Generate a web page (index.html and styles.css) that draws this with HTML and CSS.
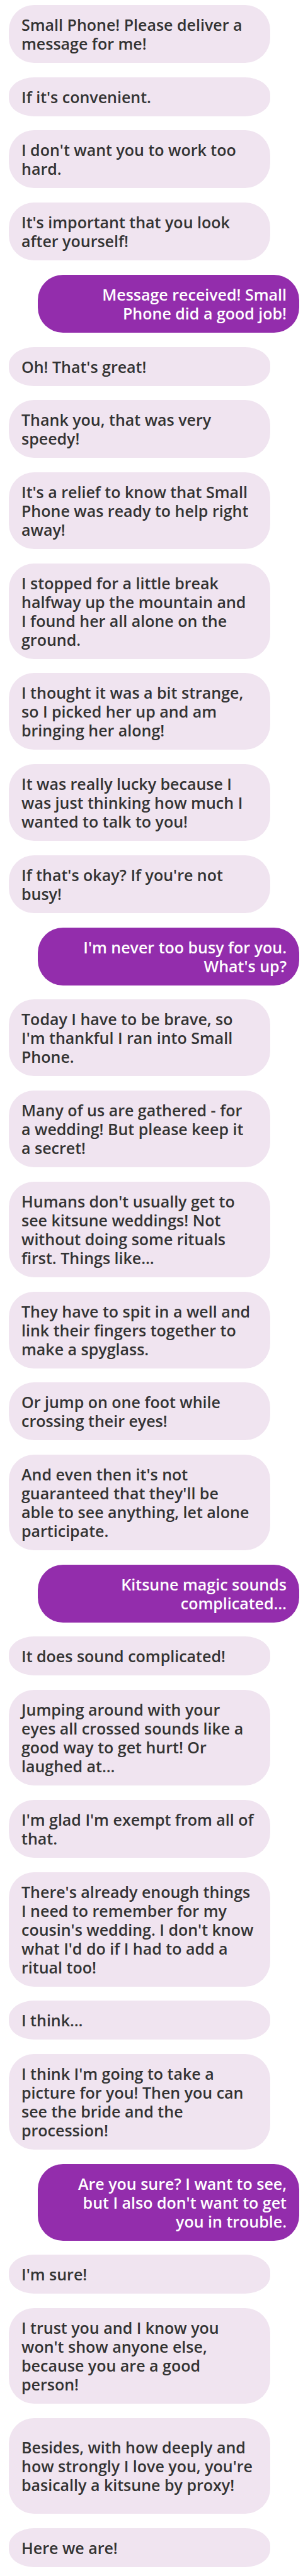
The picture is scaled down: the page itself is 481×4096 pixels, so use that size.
FILE: index.html
```html
<!DOCTYPE html>
<html lang="en">
<head>
<meta charset="utf-8">
<meta name="viewport" content="width=device-width, initial-scale=1">
<title>Messages</title>
<link rel="stylesheet" href="styles.css">
</head>
<body>
<main class="chat">
  <p class="bubble">Small Phone! Please deliver a<br>message for me!</p>
  <p class="bubble single">If it's convenient.</p>
  <p class="bubble">I don't want you to work too<br>hard.</p>
  <p class="bubble">It's important that you look<br>after yourself!</p>
  <p class="bubble reply">Message received! Small<br>Phone did a good job!</p>
  <p class="bubble single">Oh! That's great!</p>
  <p class="bubble">Thank you, that was very<br>speedy!</p>
  <p class="bubble">It's a relief to know that Small<br>Phone was ready to help right<br>away!</p>
  <p class="bubble">I stopped for a little break<br>halfway up the mountain and<br>I found her all alone on the<br>ground.</p>
  <p class="bubble">I thought it was a bit strange,<br>so I picked her up and am<br>bringing her along!</p>
  <p class="bubble">It was really lucky because I<br>was just thinking how much I<br>wanted to talk to you!</p>
  <p class="bubble">If that's okay? If you're not<br>busy!</p>
  <p class="bubble reply">I'm never too busy for you.<br>What's up?</p>
  <p class="bubble">Today I have to be brave, so<br>I'm thankful I ran into Small<br>Phone.</p>
  <p class="bubble">Many of us are gathered - for<br>a wedding! But please keep it<br>a secret!</p>
  <p class="bubble">Humans don't usually get to<br>see kitsune weddings! Not<br>without doing some rituals<br>first. Things like…</p>
  <p class="bubble">They have to spit in a well and<br>link their fingers together to<br>make a spyglass.</p>
  <p class="bubble">Or jump on one foot while<br>crossing their eyes!</p>
  <p class="bubble">And even then it's not<br>guaranteed that they'll be<br>able to see anything, let alone<br>participate.</p>
  <p class="bubble reply">Kitsune magic sounds<br>complicated…</p>
  <p class="bubble single">It does sound complicated!</p>
  <p class="bubble">Jumping around with your<br>eyes all crossed sounds like a<br>good way to get hurt! Or<br>laughed at…</p>
  <p class="bubble">I'm glad I'm exempt from all of<br>that.</p>
  <p class="bubble">There's already enough things<br>I need to remember for my<br>cousin's wedding. I don't know<br>what I'd do if I had to add a<br>ritual too!</p>
  <p class="bubble single">I think…</p>
  <p class="bubble">I think I'm going to take a<br>picture for you! Then you can<br>see the bride and the<br>procession!</p>
  <p class="bubble reply">Are you sure? I want to see,<br>but I also don't want to get<br>you in trouble.</p>
  <p class="bubble single">I'm sure!</p>
  <p class="bubble">I trust you and I know you<br>won't show anyone else,<br>because you are a good<br>person!</p>
  <p class="bubble roomy">Besides, with how deeply and<br>how strongly I love you, you're<br>basically a kitsune by proxy!</p>
  <p class="bubble single">Here we are!</p>
</main>
</body>
</html>
```
FILE: styles.css
```css
* {
  box-sizing: border-box;
}

body {
  margin: 0;
  background: #fff;
  font-family: "Open Sans", "Noto Sans", sans-serif;
  font-size: 25px;
  font-weight: 600;
  line-height: 30px;
}

.chat {
  display: flex;
  flex-direction: column;
  justify-content: space-between;
  gap: 22px;
  min-height: 100vh;
  padding: 8px 6px 14px 14px;
}

.bubble {
  align-self: flex-start;
  width: 90%;
  margin: 0;
  padding: 16px 20px;
  border-radius: 40px;
  background: #f0e4f0;
  color: #333;
}

.single {
  border-radius: 40px / 28px;
}

.roomy {
  padding: 31px 20px;
}

.reply {
  align-self: flex-end;
  background: #932dac;
  color: #fff;
  text-align: right;
}
```
